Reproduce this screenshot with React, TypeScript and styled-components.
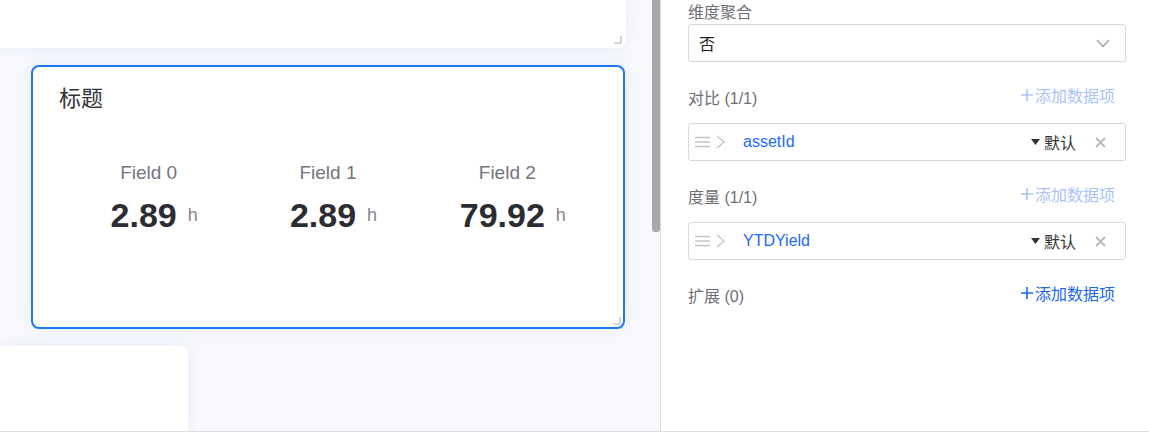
import React from 'react';
import styled, { createGlobalStyle } from 'styled-components';

const GlobalStyle = createGlobalStyle`
  body {
    margin: 0;
    font-family: "Liberation Sans", "Noto Sans CJK SC", sans-serif;
    background: #fff;
  }
`;

const Page = styled.div`
  display: flex;
  height: 432px;
  box-sizing: border-box;
  border-bottom: 1px solid #dcdce2;
  overflow: hidden;
`;

const Canvas = styled.div`
  width: 660px;
  flex-shrink: 0;
  display: flex;
  background: #f8f9fd;
`;

const CanvasContent = styled.div`
  flex: 1;
  display: flex;
  flex-direction: column;
  overflow: hidden;
`;

const ScrollTrack = styled.div`
  width: 8px;
  flex-shrink: 0;

  div {
    height: 232px;
    background: #a8a8ad;
    border-radius: 0 0 3px 3px;
  }
`;

const Widget = styled.div<{ $selected?: boolean }>`
  position: relative;
  box-sizing: border-box;
  background: #fff;
  box-shadow: 0 0 14px rgba(205, 214, 236, 0.45);
  border: ${p => (p.$selected ? '2px solid #1f78f6' : 'none')};
`;

const TopWidget = styled(Widget)`
  width: 626px;
  height: 48px;
  flex-shrink: 0;
  border-radius: 0 0 8px 0;
`;

const StatWidget = styled(Widget)`
  width: 594px;
  height: 264px;
  flex-shrink: 0;
  margin: 17px 0 0 31px;
  border-radius: 8px;
  padding: 18px 26px;
`;

const BottomWidget = styled(Widget)`
  width: 188px;
  flex: 1;
  margin-top: 17px;
  border-radius: 0 8px 0 0;
`;

const ResizeHandle = styled.svg<{ $offset: number }>`
  position: absolute;
  right: ${p => p.$offset}px;
  bottom: ${p => p.$offset}px;
`;

const Title = styled.h3`
  margin: 0;
  font-size: 22px;
  line-height: 28px;
  font-weight: 400;
  color: #333338;
`;

const Fields = styled.div`
  display: grid;
  grid-template-columns: repeat(3, 1fr);
  margin-top: 48px;
`;

const Field = styled.div`
  display: flex;
  flex-direction: column;
  align-items: center;
  gap: 10px;
`;

const FieldLabel = styled.span`
  font-size: 19px;
  line-height: 24px;
  color: #74747f;
`;

const ValueRow = styled.div`
  display: flex;
  align-items: center;
  padding-left: 11px;
  line-height: 40px;
`;

const Value = styled.strong`
  font-size: 34px;
  font-weight: 700;
  color: #2c2c33;
`;

const Unit = styled.span`
  font-size: 18px;
  color: #85858f;
  margin-left: 11px;
`;

const Panel = styled.aside`
  flex: 1;
  border-left: 1px solid #d9d9e0;
  background: #fff;
  padding: 0 23px 0 27px;
  font-size: 16px;
`;

const SectionHead = styled.div<{ $first?: boolean }>`
  display: flex;
  justify-content: space-between;
  align-items: center;
  box-sizing: border-box;
  height: ${p => (p.$first ? '24px' : '25px')};
  padding-bottom: ${p => (p.$first ? '0' : '2px')};
  margin: ${p => (p.$first ? '-1px 0 1px' : '23px 0 13px')};
  color: #6e6e78;
  font-size: 16px;
`;

const AddLink = styled.a<{ $disabled?: boolean }>`
  display: flex;
  align-items: center;
  gap: 1px;
  margin: 0 11px 3px 0;
  color: ${p => (p.$disabled ? '#a9c3f7' : '#1a66f5')};
  cursor: ${p => (p.$disabled ? 'not-allowed' : 'pointer')};
  text-decoration: none;
`;

const Select = styled.div`
  display: flex;
  align-items: center;
  justify-content: space-between;
  height: 38px;
  box-sizing: border-box;
  border: 1px solid #d8d8e0;
  border-radius: 3px;
  padding: 0 15px 0 10px;
  color: #222;
`;

const ItemRow = styled.div`
  display: flex;
  align-items: center;
  height: 38px;
  box-sizing: border-box;
  border: 1px solid #d8d8e0;
  border-radius: 3px;
  padding: 0 19px 0 6px;
`;

const Grip = styled.div`
  display: flex;
  align-items: center;
  gap: 5px;
  width: 48px;
`;

const ItemName = styled.span`
  flex: 1;
  color: #1c6af6;
`;

const Sort = styled.span`
  display: flex;
  align-items: center;
  gap: 4px;
  color: #333;
  margin-right: 19px;
`;

function Plus() {
  return (
    <svg width="14" height="14" viewBox="0 0 14 14">
      <path d="M7 1v12M1 7h12" stroke="currentColor" strokeWidth="1.6" fill="none" />
    </svg>
  );
}

function Handle({ offset }: { offset: number }) {
  return (
    <ResizeHandle $offset={offset} width="9" height="8" viewBox="0 0 9 8">
      <path d="M1 7h7V0" stroke="#c9cad3" strokeWidth="1.6" fill="none" />
    </ResizeHandle>
  );
}

type Item = { name: string };

function DataItem({ name }: Item) {
  return (
    <ItemRow>
      <Grip>
        <svg width="16" height="12" viewBox="0 0 16 12">
          <path d="M0 1.5h15M0 6h15M0 10.5h15" stroke="#c3c3ca" strokeWidth="1.5" />
        </svg>
        <svg width="9" height="14" viewBox="0 0 9 14">
          <path d="M1 1l7 6-7 6" stroke="#c3c3ca" strokeWidth="1.3" fill="none" />
        </svg>
      </Grip>
      <ItemName>{name}</ItemName>
      <Sort>
        <svg width="9" height="6" viewBox="0 0 9 6">
          <path d="M0 0h9L4.5 6z" fill="#333" />
        </svg>
        默认
      </Sort>
      <svg width="11" height="11" viewBox="0 0 11 11">
        <path d="M1 1l9 9M10 1l-9 9" stroke="#b9b9c1" strokeWidth="1.8" />
      </svg>
    </ItemRow>
  );
}

const stats = [
  { label: 'Field 0', value: '2.89', unit: 'h' },
  { label: 'Field 1', value: '2.89', unit: 'h' },
  { label: 'Field 2', value: '79.92', unit: 'h' },
];

export default function App() {
  return (
    <>
      <GlobalStyle />
      <Page>
        <Canvas>
          <CanvasContent>
            <TopWidget>
              <Handle offset={4} />
            </TopWidget>

            <StatWidget $selected>
              <Title>标题</Title>
              <Fields>
                {stats.map(s => (
                  <Field key={s.label}>
                    <FieldLabel>{s.label}</FieldLabel>
                    <ValueRow>
                      <Value>{s.value}</Value>
                      <Unit>{s.unit}</Unit>
                    </ValueRow>
                  </Field>
                ))}
              </Fields>
              <Handle offset={2} />
            </StatWidget>

            <BottomWidget />
          </CanvasContent>
          <ScrollTrack>
            <div />
          </ScrollTrack>
        </Canvas>

        <Panel>
          <SectionHead $first>维度聚合</SectionHead>
          <Select>
            否
            <svg width="14" height="9" viewBox="0 0 14 9">
              <path d="M1 1l6 6.5L13 1" stroke="#9a9aa4" strokeWidth="1.2" fill="none" />
            </svg>
          </Select>

          <SectionHead>
            对比 (1/1)
            <AddLink $disabled>
              <Plus />
              添加数据项
            </AddLink>
          </SectionHead>
          <DataItem name="assetId" />

          <SectionHead>
            度量 (1/1)
            <AddLink $disabled>
              <Plus />
              添加数据项
            </AddLink>
          </SectionHead>
          <DataItem name="YTDYield" />

          <SectionHead>
            扩展 (0)
            <AddLink>
              <Plus />
              添加数据项
            </AddLink>
          </SectionHead>
        </Panel>
      </Page>
    </>
  );
}
